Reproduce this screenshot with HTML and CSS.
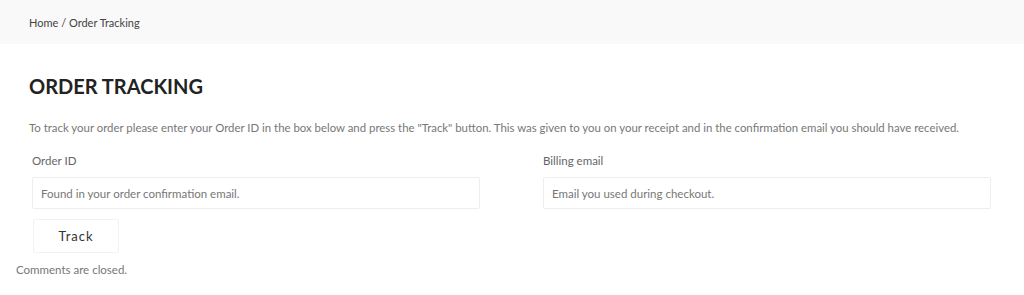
FILE: index.html
```html
<!DOCTYPE html>
<html lang="en">
<head>
    <meta charset="UTF-8">
    <meta name="viewport" content="width=device-width, initial-scale=1.0">
    <title>Order Tracking</title>
    <link rel="stylesheet" href="styles.css">
</head>
<body>
    <div class="breadcrumb-bar">
        <div class="breadcrumb"><a href="#">Home</a> / Order Tracking</div>
    </div>

    <div class="content">
        <h1 class="page-title">ORDER TRACKING</h1>
        <form class="track-form">
            <p class="intro">To track your order please enter your Order ID in the box below and press the "Track" button. This was given to you on your receipt and in the confirmation email you should have received.</p>
            <div class="form-row">
                <div class="field">
                    <label for="orderid">Order ID</label>
                    <input type="text" id="orderid" placeholder="Found in your order confirmation email.">
                </div>
                <div class="field">
                    <label for="order_email">Billing email</label>
                    <input type="text" id="order_email" placeholder="Email you used during checkout.">
                </div>
            </div>
            <button type="button" class="button">Track</button>
        </form>
    </div>

    <p class="comments">Comments are closed.</p>
</body>
</html>
```

FILE: styles.css
```css
body {
    margin: 0;
    font-family: Lato, "Open Sans", Arial, sans-serif;
    color: #777;
    background: #fff;
}
.breadcrumb-bar {
    background-color: #f9f9f9;
    height: 44px;
    display: flex;
    align-items: center;
    padding: 0 29px;
}
.breadcrumb {
    font-size: 11px;
    color: #444;
}
.breadcrumb a {
    color: #444;
    text-decoration: none;
}
.content {
    padding: 0 29px;
}
.page-title {
    margin: 29px 0 0;
    font-size: 20px;
    font-weight: 700;
    color: #222;
    line-height: 1.3;
}
.intro {
    margin: 20px 0 0;
    font-size: 11.4px;
    line-height: 18px;
}
.form-row {
    display: grid;
    grid-template-columns: 448px 448px;
    column-gap: 63px;
    margin: 17px 0 0 3px;
}
.field label {
    display: block;
    font-size: 11.5px;
    color: #666;
    line-height: 14px;
    margin-bottom: 9px;
}
.field input {
    box-sizing: border-box;
    width: 100%;
    height: 32px;
    border: 1px solid #eee;
    border-radius: 2px;
    padding: 0 8px;
    font-family: inherit;
    font-size: 11.5px;
    color: #777;
}
.field input::placeholder {
    color: #777;
}
.button {
    margin: 10px 0 0 4px;
    width: 86px;
    height: 34px;
    background: #fff;
    border: 1px solid #f2f2f2;
    font-family: inherit;
    font-size: 13px;
    letter-spacing: 1px;
    color: #333;
    cursor: pointer;
}
.comments {
    margin: 10px 0 0 16px;
    font-size: 11.5px;
    color: #777;
}
```
